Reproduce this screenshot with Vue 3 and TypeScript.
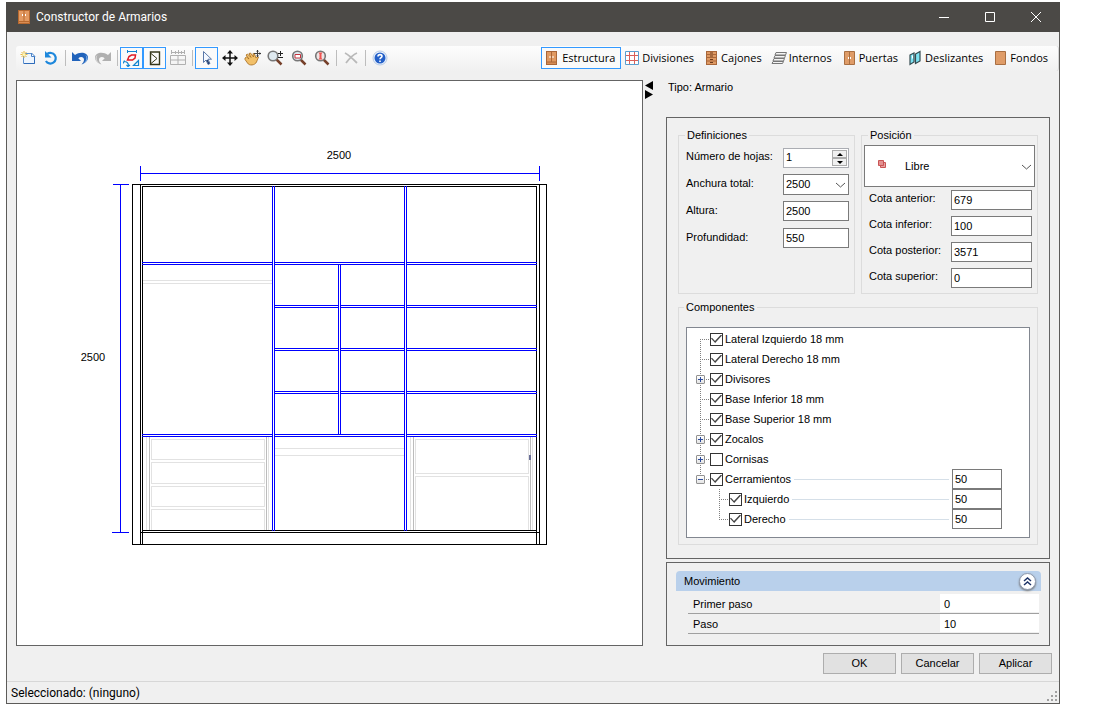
<script setup lang="ts">
import { reactive, ref } from 'vue'

type Bar = [x: number, y: number, w: number, h: number]

const blue: Bar[] = [
  // dimension marks
  [140, 166, 1, 15], [539, 166, 1, 15], [140, 173, 400, 1],
  [113, 184, 16, 1], [112, 532, 17, 1], [120, 184, 1, 349],
  // uprights
  [272, 186, 1, 345], [274, 186, 1, 345], [404, 186, 1, 345], [406, 186, 1, 345],
  [338, 264, 1, 171], [340, 264, 1, 171],
  // full-width shelves
  [142, 262, 131, 1], [142, 264, 131, 1], [274, 262, 131, 1], [274, 264, 131, 1], [406, 262, 131, 1], [406, 264, 131, 1],
  [142, 434, 131, 1], [142, 436, 131, 1], [274, 434, 131, 1], [274, 436, 131, 1], [406, 434, 131, 1], [406, 436, 131, 1],
  // small shelves
  ...[305, 307, 348, 350, 391, 393].flatMap((y): Bar[] => [[274, y, 65, 1], [340, y, 65, 1], [406, y, 131, 1]]),
]

const black: Bar[] = [
  [132, 184, 415, 1], [142, 186, 395, 1], [132, 544, 415, 1],
  [142, 530, 395, 1], [140, 532, 400, 1],
  [132, 184, 1, 361], [140, 184, 1, 361], [142, 186, 1, 359],
  [536, 186, 1, 359], [539, 184, 1, 361], [546, 184, 1, 361],
]

const pale: Bar[] = [
  [143, 280, 129, 1], [143, 283, 129, 1], [275, 448, 129, 1], [275, 455, 129, 1],
  [146, 437, 1, 93], [268, 437, 1, 93], [410, 437, 1, 93], [532, 437, 1, 93],
  ...([[439, 459], [462, 483], [486, 506], [509, 530]] as const).flatMap(([a, b]): Bar[] => [
    [151, a, 114, 1], [151, b, 114, 1], [151, a, 1, b - a], [264, a, 1, b - a],
  ]),
  ...([[439, 473], [476, 530]] as const).flatMap(([a, b]): Bar[] => [
    [415, a, 114, 1], [415, b, 114, 1], [415, a, 1, b - a], [528, a, 1, b - a],
  ]),
]

const grey: Bar[] = [[149, 437, 1, 93], [266, 437, 1, 93], [413, 437, 1, 93], [530, 437, 1, 93]]

const tabs = ['Estructura', 'Divisiones', 'Cajones', 'Internos', 'Puertas', 'Deslizantes', 'Fondos']
const tab = ref('Estructura')

const leaves = ref(1)
const size = reactive({ anchura: '2500', altura: '2500', profundidad: '550' })
const position = ref('Libre')
const cotas = reactive([
  { id: 'anterior', value: '679' },
  { id: 'inferior', value: '100' },
  { id: 'posterior', value: '3571' },
  { id: 'superior', value: '0' },
])

interface Node { label: string; on: boolean; child?: boolean; sign?: '+' | '-'; value?: string; last?: boolean }
const nodes = reactive<Node[]>([
  { label: 'Lateral Izquierdo 18 mm', on: true },
  { label: 'Lateral Derecho 18 mm', on: true },
  { label: 'Divisores', on: true, sign: '+' },
  { label: 'Base Inferior 18 mm', on: true },
  { label: 'Base Superior 18 mm', on: true },
  { label: 'Zocalos', on: true, sign: '+' },
  { label: 'Cornisas', on: false, sign: '+' },
  { label: 'Cerramientos', on: true, sign: '-', value: '50', last: true },
  { label: 'Izquierdo', on: true, child: true, value: '50' },
  { label: 'Derecho', on: true, child: true, value: '50', last: true },
])

function trunk(node: Node, index: number): string {
  const x = node.child ? 32 : 13
  const top = index === 0 ? 10 : 0
  const bottom = node.last ? 10 : 20
  return `M${x + 0.5} ${top}V${bottom}M${x} 10.5H${x + 10}`
}

const steps = reactive([
  { label: 'Primer paso', value: '0' },
  { label: 'Paso', value: '10' },
])
</script>

<template>
  <div class="page">
    <main class="window">
      <header class="titlebar">
        <svg class="app-icon" width="12" height="14" viewBox="0 0 12 14">
          <path d="M0 0h12v14H0z" fill="#b8692f" /><path d="M1 1h4.500v10H1zM6.500 1H11v10H6.500z" fill="#e39a62" />
          <path d="M1 12h10v1H1z" fill="#d98c53" /><path d="M4 4h1v2H4zM7 4h1v2H7z" fill="#fff" />
        </svg>
        <h1>Constructor de Armarios</h1>
        <button class="win" aria-label="Minimizar"><svg width="12" height="12"><path d="M1 6.500h10" /></svg></button>
        <button class="win" aria-label="Maximizar"><svg width="12" height="12"><path d="M1.500 1.500h9v9h-9z" /></svg></button>
        <button class="win" aria-label="Cerrar"><svg width="12" height="12"><path d="M1 1l10 10M11 1L1 11" /></svg></button>
      </header>

      <div class="toolbar">
        <div class="tools">
          <button class="tool" aria-label="Nuevo">
            <svg width="16" height="16"><path d="M3.500 3.500h8l3 3v7h-11z" fill="#eef5fd" stroke="#5f92d0" /><path d="M4 13.500h10.500V7" fill="none" stroke="#2f6cba" /><path d="M11.500 3v3.500H15z" fill="#fff" stroke="#4a83c9" /><path d="M4 1v7M.5 4.500h7M1.500 2l5 5M6.500 2l-5 5" stroke="#e6b93c" /><circle cx="4" cy="4.500" r="1.500" fill="#fff6b8" /></svg>
          </button>
          <button class="tool" aria-label="Recargar">
            <svg width="16" height="16"><path d="M4.200 4a5.300 5.300 0 1 1-1.300 7" fill="none" stroke="#1e88dc" stroke-width="2.200" /><path d="M2 1v6.500h6.500z" fill="#1e88dc" /></svg>
          </button>
          <span class="sep"></span>
          <button class="tool" aria-label="Deshacer">
            <svg width="16" height="16"><path d="M0 2v9h9L6.300 8.300c2.500-2.300 5.700-1.300 5.700 1.500 0 2-1 3.200-2.500 4.700 4-1.500 6.500-4 6.500-7C16 2.500 8 1 3 5z" fill="#2163bb" /><path d="M13.500 5c2 3 .5 6-2 8.500 4-2.500 5.500-6 2-8.500z" fill="#8ab8ea" /></svg>
          </button>
          <button class="tool" aria-label="Rehacer">
            <svg width="16" height="16"><path d="M16 2v9H7l2.700-2.700C7.200 6 4 7 4 9.800c0 2 1 3.200 2.500 4.700C2.500 13 0 10.500 0 7.500 0 2.500 8 1 13 5z" fill="#b0b0b0" /><path d="M2.500 5c-2 3-.5 6 2 8.500C.5 11-1 7.500 2.500 5z" fill="#dcdcdc" /></svg>
          </button>
          <span class="sep"></span>
          <button class="tool on" aria-label="Mostrar cotas">
            <svg width="17" height="17" fill="none"><path d="M4.500 0v3M13.500 0v3M4.500 1.500h9" stroke="#1584cf" /><path d="M4.500 10l1.500-3.500 2.500-1.500h4l-.5 3-2.500 2z" stroke="#e01b24" stroke-width="1.500" /><path d="M1 11.500c3 0 4.500 1.500 4.500 4.500M0 13.500l1.500-3M3.500 15L5 16.500 7 15M10.500 15.500l5-5v5z" stroke="#1584cf" stroke-width="1.200" /></svg>
          </button>
          <button class="tool on" aria-label="Mostrar puertas">
            <svg width="16" height="16" fill="none"><path d="M3.500 2h9v12.500h-9z" stroke="#36371c" stroke-width="1.400" /><path d="M4 3.500l6 5-6 5" stroke="#36371c" /></svg>
          </button>
          <button class="tool" aria-label="Rejilla">
            <svg width="16" height="16" fill="none" stroke="#b0b0b0"><path d="M.5 5.500h15v9H.5zM.5 10h15M8 5v10M1.500 0v4M5.500 1v3M8.500 0v4M11.500 1v3M14.500 0v4M1 2.500h14" /></svg>
          </button>
          <span class="sep"></span>
          <button class="tool on" aria-label="Seleccionar">
            <svg width="16" height="16"><path d="M4.500 1.500v11l2.500-2.500 2 4.500 2-1-2-4.300h3.500z" fill="#f4f8ff" stroke="#5a78a8" /><path d="M8 10l2 4" stroke="#26406c" stroke-width="1.500" /></svg>
          </button>
          <button class="tool" aria-label="Mover">
            <svg width="16" height="16"><path d="M8 1v14M1 8h14" stroke="#111" stroke-width="1.500" /><path d="M8 0l3 3.500H5zM8 16l3-3.500H5zM0 8l3.500-3v6zM16 8l-3.500-3v6z" fill="#111" /></svg>
          </button>
          <button class="tool" aria-label="Desplazar vista">
            <svg width="17" height="16"><path d="M1 8l1.500-1L5 9 2 5l1.500-1 3.500 3.500L5 3.500 6.500 3l3 4L9 3.500l1.500.5 1.500 4c1-1.500 2-1.500 2.500-1L12.500 12c-1.500 3.500-7.500 4-9 1L1 9.500z" fill="#f2c069" stroke="#a56a1c" stroke-width=".8" /><path d="M13.500 0v7M10 3.500h7" stroke="#444" /><path d="M13.500 0l1.500 1.500h-3zM13.500 7L15 5.500h-3zM17 3.500L15.500 2v3z" fill="#333" /></svg>
          </button>
          <button class="tool" aria-label="Zoom">
            <svg width="17" height="16"><path d="M9.500 9.500l5 5" stroke="#76402a" stroke-width="2.500" /><circle cx="6" cy="6" r="4.800" fill="#dfe9ef" stroke="#777" stroke-width="1.600" /><path d="M11 3.500h5M13.500 1v5M11 7.500h5" stroke="#222" /></svg>
          </button>
          <button class="tool" aria-label="Zoom ventana">
            <svg width="16" height="16"><path d="M9.500 9.500l5 5" stroke="#76402a" stroke-width="2.500" /><circle cx="6.500" cy="6" r="4.800" fill="#dfe9ef" stroke="#777" stroke-width="1.600" /><path d="M4 4.500h5.500v3.500H4z" fill="#fff" stroke="#c5323c" /></svg>
          </button>
          <button class="tool" aria-label="Zoom extensión">
            <svg width="16" height="16"><path d="M9.500 9.500l5 5" stroke="#76402a" stroke-width="2.500" /><circle cx="6.500" cy="6" r="4.800" fill="#eee4e4" stroke="#777" stroke-width="1.600" /><path d="M4.500 2.500h4L7.500 4v4l1 1.500h-4L5.500 8V4z" fill="#ef5350" /></svg>
          </button>
          <span class="sep"></span>
          <button class="tool" aria-label="Eliminar">
            <svg width="16" height="16"><path d="M2 3c4 2 8 6 12 10M14 3C9 5 6 9 3 13" stroke="#b9b9b9" stroke-width="1.800" fill="none" /></svg>
          </button>
          <span class="sep"></span>
          <button class="tool" aria-label="Ayuda">
            <svg width="16" height="16"><circle cx="8" cy="8" r="7" fill="#e9f1fc" stroke="#b8cbe6" /><circle cx="8" cy="8" r="5.500" fill="#2460c8" /><path d="M6 6.500c0-2.500 4-2.500 4-.2C10 7.500 8 7.700 8 9.200M8 10.500v1.500" fill="none" stroke="#fff" stroke-width="1.600" /></svg>
          </button>
        </div>

        <nav class="tabs">
          <button v-for="t in tabs" :key="t" class="tab" :class="{ on: tab === t }" @click="tab = t">
            <svg width="16" height="16" viewBox="0 0 16 16">
              <g v-if="t === 'Estructura'"><path d="M2 1h11v14H2z" fill="#a9673a" /><path d="M3 2h4v9.500H3zM8 2h4v9.500H8z" fill="#e09a63" /><path d="M3 12.500h9V14H3z" fill="#d68d55" /><path d="M5.500 6h1v2h-1zM8.500 6h1v2h-1z" fill="#fff" /></g>
              <g v-else-if="t === 'Divisiones'" fill="none"><path d="M1.500 1.500h13v13h-13z" fill="#fff" stroke="#5a9fd0" /><path d="M5.500 2v12M10.500 2v12M2 5.500h12M2 10.500h12" stroke="#d9605a" /></g>
              <g v-else-if="t === 'Cajones'"><path d="M3 1h11v14H3z" fill="#a9673a" /><path d="M4 2h9v2H4zM4 5h9v2H4zM4 8h9v2.500H4zM4 11.500h9V14H4z" fill="#df9a64" /><path d="M7 3h3M7 6h3M7 9.500h3M7 12.500h3" stroke="#6d3b1b" /></g>
              <g v-else-if="t === 'Internos'" fill="#f4f4f4" stroke="#777"><path d="M5 2.500h10.500l-1 2.500H4zM4 5.500h10.500l-1 2.500H3zM3 8.500h10.500l-1 2.500H2zM2 11.500h10.500l-1 2H1z" /></g>
              <g v-else-if="t === 'Puertas'"><path d="M3.500 1.500h10v13h-10z" fill="#df9c68" stroke="#a96f42" /><path d="M8.500 2v12" stroke="#a96f42" /><path d="M7 7h1v2H7zM9 7h1v2H9z" fill="#fff" /></g>
              <g v-else-if="t === 'Deslizantes'" fill="#7de2f2" stroke="#344b50"><path d="M3 5l4-2v9l-4 2.500zM8.500 4l4.500-2.500v9.500l-4.500 2.500z" stroke-width="1.200" /><path d="M5 6l1-1v3L5 9z" fill="#fff" stroke="none" /></g>
              <g v-else><path d="M3.500 1.500h10v13h-10z" fill="#df9c68" stroke="#a96f42" /></g>
            </svg>
            <span>{{ t }}</span>
          </button>
        </nav>
      </div>

      <div class="content">
        <section class="canvas" aria-label="Vista frontal">
          <svg viewBox="17 81 625 564">
            <g fill="#e2e2e2"><rect v-for="(b, i) in pale" :key="i" :x="b[0]" :y="b[1]" :width="b[2]" :height="b[3]" /></g>
            <g fill="#bcbcbc"><rect v-for="(b, i) in grey" :key="i" :x="b[0]" :y="b[1]" :width="b[2]" :height="b[3]" /></g>
            <g fill="#000"><rect v-for="(b, i) in black" :key="i" :x="b[0]" :y="b[1]" :width="b[2]" :height="b[3]" /></g>
            <g fill="#00f"><rect v-for="(b, i) in blue" :key="i" :x="b[0]" :y="b[1]" :width="b[2]" :height="b[3]" /></g>
            <rect x="529" y="455" width="2" height="5" fill="#6a6f98" />
            <text x="339" y="159">2500</text>
            <text x="93" y="361">2500</text>
          </svg>
        </section>

        <div class="splitter">
          <svg width="9" height="18"><path d="M8 0v9L0 4.500zM0 9v9l8-4.500z" /></svg>
        </div>

        <aside class="side">
          <p class="kind">Tipo: Armario</p>
          <section class="panel">
            <div class="pair">
              <fieldset class="defs">
                <legend>Definiciones</legend>
                <label for="leaves">Número de hojas:</label>
                <div class="spin">
                  <input id="leaves" v-model.number="leaves" type="number">
                  <div class="arrows">
                    <button aria-label="Más" @click="leaves++"><svg width="6" height="3"><path d="M3 0l3 3H0z" /></svg></button>
                    <button aria-label="Menos" @click="leaves--"><svg width="6" height="3"><path d="M0 0h6L3 3z" /></svg></button>
                  </div>
                </div>
                <label for="width">Anchura total:</label>
                <div class="drop">
                  <select id="width" v-model="size.anchura"><option>2500</option></select>
                  <svg width="9" height="6"><path d="M0 1l4.500 4L9 1" /></svg>
                </div>
                <label for="height">Altura:</label>
                <input id="height" v-model="size.altura" class="box">
                <label for="depth">Profundidad:</label>
                <input id="depth" v-model="size.profundidad" class="box">
              </fieldset>

              <fieldset class="pos">
                <legend>Posición</legend>
                <div class="drop big">
                  <svg class="cube" width="9" height="9"><path d="M2.500 2.500h5v5h-5z" fill="#e9a2a2" stroke="#c95454" /><path d="M.5.5h5v5h-5z" fill="#e39090" stroke="#c95454" /></svg>
                  <select v-model="position" aria-label="Posición"><option>Libre</option></select>
                  <svg width="9" height="6"><path d="M0 1l4.500 4L9 1" /></svg>
                </div>
                <div class="cotas">
                  <template v-for="c in cotas" :key="c.id">
                    <label :for="c.id">Cota {{ c.id }}:</label>
                    <input :id="c.id" v-model="c.value" class="box">
                  </template>
                </div>
              </fieldset>
            </div>

            <fieldset class="comps">
              <legend>Componentes</legend>
              <ul class="tree">
                <li v-for="(n, i) in nodes" :key="n.label" :class="{ child: n.child }">
                  <span class="gutter">
                    <svg height="20" width="42"><path :d="trunk(n, i)" /></svg>
                    <button v-if="n.sign" class="expander" :aria-label="n.sign === '+' ? 'Expandir' : 'Contraer'">
                      <svg width="5" height="5"><path :d="n.sign === '+' ? 'M0 2h5v1H0zM2 0h1v5H2z' : 'M0 2h5v1H0z'" /></svg>
                    </button>
                  </span>
                  <input :id="'node' + i" v-model="n.on" type="checkbox">
                  <label :for="'node' + i">{{ n.label }}</label>
                  <template v-if="n.value">
                    <span class="leader"></span>
                    <input v-model="n.value" class="box" :aria-label="n.label">
                  </template>
                </li>
              </ul>
            </fieldset>
          </section>

          <section class="panel move">
            <h2>
              Movimiento
              <button class="collapse" aria-label="Contraer"><svg width="9" height="9"><path d="M1 4l3.500-3L8 4M1 8l3.500-3L8 8" /></svg></button>
            </h2>
            <div v-for="(s, i) in steps" :key="s.label" class="step">
              <label :for="'step' + i">{{ s.label }}</label>
              <input :id="'step' + i" v-model="s.value">
            </div>
          </section>
        </aside>
      </div>

      <div class="actions">
        <button>OK</button>
        <button>Cancelar</button>
        <button>Aplicar</button>
      </div>

      <footer class="status">
        <span>Seleccionado: (ninguno)</span>
        <svg width="10" height="10"><path d="M8 0h2v2H8zM4 4h2v2H4zM8 4h2v2H8zM0 8h2v2H0zM4 8h2v2H4zM8 8h2v2H8z" /></svg>
      </footer>
    </main>
  </div>
</template>

<style>
body { margin: 0; background: #fff; }
</style>

<style scoped>
* { box-sizing: border-box; }
.page { display: flex; min-height: 100vh; padding: 2px 55px 10px 6px; font: 11px/13px "Liberation Sans", Arial, sans-serif; color: #000; }
button, input, select { font: inherit; color: inherit; margin: 0; border-radius: 0; }
button { padding: 0; border: 0; background: none; display: flex; align-items: center; justify-content: center; }
.window { flex: 1; min-width: 0; display: flex; flex-direction: column; background: #f0f0f0; border: 1px solid #5c5b59; border-top: 0; }
.titlebar { display: flex; align-items: center; height: 30px; margin: 0 -1px; padding-right: 1px; padding-left: 12px; background: #4b4946; color: #fff; }
.titlebar h1 { flex: 1; margin: 0 0 0 6px; font: 12px/16px Roboto, sans-serif; }
.win { width: 46px; height: 30px; }
.win svg { fill: none; stroke: #fff; }

.toolbar { display: flex; justify-content: space-between; margin: 14px 0 9px 9px; height: 25px; padding: 1px 4px 2px 0; border-right: 1px solid #d5d5d5; border-radius: 3px; background: linear-gradient(#fdfdfd, #f0f0f0); }
.tools, .tabs { display: flex; }
.tool { width: 23px; height: 22px; border: 1px solid transparent; }
.tool svg { display: block; flex: none; }
.tool.on, .tab.on { border-color: #3399ff; background: #fafafa; }
.sep { width: 6px; height: 16px; margin-top: 3px; background: linear-gradient(#bdbdbd, #bdbdbd) 3px 0 / 1px 100% no-repeat; }
.tab { height: 22px; gap: 2px; padding: 0 5px 0 2px; border: 1px solid transparent; font: 11px/16px "Open Sans", "Noto Sans", sans-serif; white-space: nowrap; }

.content { display: flex; padding: 0 9px; }
.canvas { flex: 1; min-width: 0; background: #fff; border: 1px solid #646464; }
.canvas svg { display: block; width: 100%; shape-rendering: crispEdges; }
.canvas text { font-size: 11px; text-anchor: middle; }
.splitter { width: 23px; padding: 1px 2px; }
.side { width: 384px; display: flex; flex-direction: column; }
.kind { margin: 0; height: 37px; padding: 1px 2px; }
.panel { border: 1px solid #646464; padding: 11px 11px 13px; }
fieldset { min-width: 0; margin: 0; border: 1px solid #dcdcdc; padding: 0; }
legend { margin-left: 6px; padding: 0 2px; }
.pair { display: grid; grid-template-columns: 1fr 1fr; gap: 6px; }
.defs { height: 165px; padding: 5px 5px 0 7px; display: grid; grid-template-columns: 1fr 66px; grid-auto-rows: 27px; align-items: start; align-content: start; }
.defs legend { margin-left: -1px; }
.defs label, .cotas label { line-height: 18px; }
.box { width: 100%; min-width: 0; height: 20px; padding: 0 2px; border: 1px solid #7a7a7a; background: #fff; }
.spin { display: flex; height: 20px; margin-top: 1px; padding: 1px; border: 1px solid #abadb3; background: #fff; }
.spin input { flex: 1; min-width: 0; border: 0; padding: 0 1px 2px; background: none; appearance: textfield; -moz-appearance: textfield; }
.spin input::-webkit-inner-spin-button { appearance: none; margin: 0; }
.arrows { display: grid; grid-template-rows: 1fr 1fr; width: 15px; }
.arrows button { min-height: 0; border: 1px solid #acacac; background: #f0f0f0; }
.drop { position: relative; height: 21px; }
.drop select { width: 100%; height: 100%; padding: 0 2px; appearance: none; border: 1px solid #7a7a7a; background: #fff; }
.drop svg { position: absolute; right: 4px; top: 8px; fill: none; stroke: #555; pointer-events: none; }
.pos { height: 165px; padding: 3px 2px 0; }
.pos legend { margin-left: 4px; }
.drop.big { height: 42px; }
.drop.big select { padding-left: 40px; }
.drop.big svg { top: 19px; }
.drop.big .cube { right: auto; left: 14px; top: 15px; }
.cotas { display: grid; grid-template-columns: 1fr 81px; grid-auto-rows: 26px; align-items: start; padding: 3px 3px 0 5px; }
.cotas label { line-height: 17px; }
.comps { margin-top: 7px; padding: 13px 7px 6px; }
.comps legend { margin-left: -2px; }
.tree { list-style: none; margin: 0; height: 211px; padding: 1px 27px 0 0; background: #fff; border: 1px solid #828790; }
.tree li { display: flex; align-items: center; height: 20px; }
.gutter { position: relative; flex: none; width: 23px; height: 20px; overflow: hidden; }
.child .gutter { width: 42px; }
.gutter > svg { display: block; fill: none; stroke: #808080; stroke-dasharray: 1 1; shape-rendering: crispEdges; }
.expander { position: absolute; left: 9px; top: 6px; width: 9px; height: 9px; border: 1px solid #919191; border-radius: 1px; background: linear-gradient(#fff, #e4e4e4); fill: #2b4a9b; }
.tree input[type="checkbox"] { appearance: none; flex: none; width: 13px; height: 13px; border: 1px solid #333; background: #fff; display: grid; place-content: center; }
.tree input[type="checkbox"]:checked::before { content: ""; width: 11px; height: 9px; background: #444; clip-path: polygon(0 45%, 9% 35%, 36% 72%, 91% 0, 100% 10%, 38% 95%); }
.tree label { margin-left: 2px; white-space: nowrap; }
.leader { flex: 1; height: 1px; margin: 0 3px; background: #d5dfe8; }
.tree .box { flex: none; width: 50px; }

.move { margin-top: 3px; height: 84px; padding: 8px 8px 0 9px; }
.move h2 { display: flex; align-items: center; justify-content: space-between; height: 20px; margin: 0 0 3px; padding: 0 5px 0 8px; font-size: 11px; font-weight: normal; background: #b9d0eb; border-radius: 4px 4px 0 0; }
.collapse { width: 17px; height: 17px; border: 1px solid #8f9bb0; border-radius: 50%; background: #fff; box-shadow: 0 1px 2px #777; }
.collapse svg { fill: none; stroke: #1d3368; stroke-width: 1.5; }
.step { display: flex; justify-content: space-between; height: 20px; margin: 0 2px 0 12px; border-bottom: 1px solid #a0a0a0; }
.step label { padding-left: 5px; line-height: 20px; }
.step input { width: 99px; height: 18px; border: 0; padding: 1px 4px 0; background: #fff; }

.actions { display: flex; justify-content: flex-end; gap: 5px; padding: 7px 7px; }
.actions button { width: 73px; height: 21px; border: 1px solid #adadad; background: #e1e1e1; }
.status { flex: 1; display: flex; align-items: center; justify-content: space-between; min-height: 22px; padding: 0 2px 0 4px; border-top: 1px solid #d7d7d7; border-bottom: 0; font: 12px/16px Roboto, sans-serif; }
.status svg { align-self: flex-end; margin-bottom: 2px; fill: #a0a0a0; }
</style>
